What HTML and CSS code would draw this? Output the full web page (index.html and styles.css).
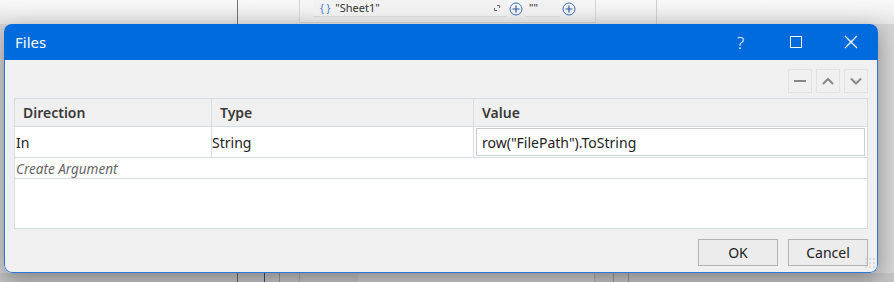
FILE: index.html
```html
<!DOCTYPE html>
<html lang="en">
<head>
    <meta charset="UTF-8">
    <title>Files</title>
    <link rel="stylesheet" href="styles.css">
</head>
<body>
    <div class="backdrop backdrop-top">
        <div class="bg-col col-left"></div>
        <div class="bg-col col-gap"></div>
        <div class="panel">
            <div class="arg-row">
                <div class="field field-name">
                    <span class="brace">{ }</span>
                    <span class="field-text">"Sheet1"</span>
                    <svg class="expand" width="8" height="8" viewBox="0 0 8 8"><path d="M4 1.5H6.5V4M1.5 4V6.5H4" fill="none" stroke="#666" stroke-width="1"/></svg>
                </div>
                <svg class="plus" width="14" height="14" viewBox="0 0 14 14"><circle cx="7" cy="7" r="6" fill="none" stroke="#3a6fb7" stroke-width="1"/><path d="M7 3.5V10.5M3.5 7H10.5" stroke="#2a5fa8" stroke-width="1.2"/></svg>
                <div class="field field-value">
                    <span class="field-text">""</span>
                </div>
                <svg class="plus" width="14" height="14" viewBox="0 0 14 14"><circle cx="7" cy="7" r="6" fill="none" stroke="#3a6fb7" stroke-width="1"/><path d="M7 3.5V10.5M3.5 7H10.5" stroke="#2a5fa8" stroke-width="1.2"/></svg>
            </div>
        </div>
        <div class="bg-col col-right"></div>
    </div>

    <div class="dialog">
        <div class="titlebar">
            <span class="title">Files</span>
            <div class="window-buttons">
                <span class="win-btn help">?</span>
                <span class="win-btn"><span class="max-box"></span></span>
                <span class="win-btn">
                    <svg width="14" height="14" viewBox="0 0 14 14"><path d="M1 1L13 13M13 1L1 13" stroke="#fff" stroke-width="1.2"/></svg>
                </span>
            </div>
        </div>

        <div class="dialog-body">
            <div class="toolbar">
                <button class="tool-btn" title="Remove">
                    <svg width="14" height="14" viewBox="0 0 14 14"><path d="M1 7H13" stroke="#888" stroke-width="2"/></svg>
                </button>
                <button class="tool-btn" title="Move up">
                    <svg width="14" height="14" viewBox="0 0 14 14"><path d="M2 10L7 5L12 10" fill="none" stroke="#888" stroke-width="2"/></svg>
                </button>
                <button class="tool-btn" title="Move down">
                    <svg width="14" height="14" viewBox="0 0 14 14"><path d="M2 4.5L7 9.5L12 4.5" fill="none" stroke="#888" stroke-width="2"/></svg>
                </button>
            </div>

            <div class="grid">
                <div class="grid-row grid-head">
                    <div class="cell col-dir">Direction</div>
                    <div class="cell col-type">Type</div>
                    <div class="cell col-value">Value</div>
                </div>
                <div class="grid-row grid-item">
                    <div class="cell col-dir">In</div>
                    <div class="cell col-type">String</div>
                    <div class="cell col-value">
                        <div class="value-input">row("FilePath").ToString</div>
                    </div>
                </div>
                <div class="create-row">Create Argument</div>
            </div>

            <div class="actions">
                <button class="btn">OK</button>
                <button class="btn">Cancel</button>
                <div class="grip"></div>
            </div>
        </div>
    </div>

    <div class="backdrop backdrop-bottom">
        <div class="bg-col b1"></div>
        <div class="bg-col b2"></div>
        <div class="bg-col b3"></div>
        <div class="bg-col b4"></div>
        <div class="bg-col b5"></div>
        <div class="bg-col b6"></div>
        <div class="bg-col b7"></div>
        <div class="bg-col b8"></div>
    </div>
</body>
</html>
```

FILE: styles.css
```css
* {
    margin: 0;
    padding: 0;
    box-sizing: border-box;
    font-family: "Noto Sans", "Open Sans", sans-serif;
}

body {
    width: 894px;
    height: 282px;
    overflow: hidden;
    background-color: #d4d4d4;
    color: #222;
    display: flex;
    flex-direction: column;
}

/* background application behind the dialog */
.backdrop {
    display: flex;
}

.backdrop-top {
    height: 24px;
    background: linear-gradient(to bottom, #f9f9f9, #e6e6e6);
}

.bg-col {
    height: 100%;
}

.col-left {
    width: 238px;
    border-right: 1px solid #707070;
}

.col-gap {
    width: 61px;
}

.panel {
    width: 297px;
    height: 23px;
    border-left: 1px solid #d6d6d6;
    border-right: 1px solid #d6d6d6;
    border-bottom: 1px solid #d6d6d6;
    background: linear-gradient(to bottom, #f7f7f7, #ececec);
    padding-left: 13px;
}

.col-right {
    width: 61px;
    border-right: 1px solid #cdcdcd;
}

.arg-row {
    display: flex;
    align-items: center;
    height: 17px;
}

.field {
    display: flex;
    align-items: center;
    height: 17px;
    background-color: #f2f2f2;
    border-bottom: 1px solid #dcdcdc;
    font-size: 11px;
    color: #333;
}

.field-name {
    width: 194px;
    padding-left: 7px;
    padding-right: 6px;
}

.brace {
    color: #3a7bd5;
    font-size: 10px;
    margin-right: 5px;
}

.field-text {
    flex: 1;
    line-height: 16px;
}

.expand {
    margin-left: auto;
}

.plus {
    margin: 0 2px;
}

.field-value {
    width: 35px;
    padding-left: 4px;
}

/* dialog window */
.dialog {
    position: relative;
    z-index: 1;
    width: 874px;
    height: 249px;
    margin-left: 4px;
    border-radius: 8px;
    background-color: #f0f0f0;
    box-shadow: 0 6px 22px rgba(0, 0, 0, 0.35);
    display: flex;
    flex-direction: column;
    overflow: hidden;
}

.titlebar {
    height: 36px;
    background-color: #006bdc;
    color: #fff;
    display: flex;
    align-items: center;
    padding-left: 11px;
    flex-shrink: 0;
}

.title {
    font-size: 15px;
}

.window-buttons {
    margin-left: auto;
    display: flex;
    align-items: center;
    height: 100%;
}

.win-btn {
    width: 55px;
    height: 100%;
    display: flex;
    align-items: center;
    justify-content: center;
    color: #fff;
    font-size: 17px;
    font-weight: 300;
}

.max-box {
    width: 12px;
    height: 12px;
    border: 1px solid #fff;
}

.dialog-body {
    flex: 1;
    border: 1px solid #2a78d4;
    border-top: none;
    border-radius: 0 0 8px 8px;
    padding: 9px 9px 0 9px;
    display: flex;
    flex-direction: column;
}

.toolbar {
    display: flex;
    justify-content: flex-end;
    gap: 4px;
    height: 24px;
}

.tool-btn {
    width: 24px;
    height: 24px;
    border: 1px solid #e2e2e2;
    background-color: #f0f0f0;
    display: flex;
    align-items: center;
    justify-content: center;
}

.grid {
    margin-top: 5px;
    height: 131px;
    background-color: #fff;
    border: 1px solid #d6dde2;
}

.grid-row {
    display: flex;
    border-bottom: 1px solid #d6dde2;
}

.grid-head {
    height: 28px;
    background-color: #f0f0f0;
}

.grid-head .cell {
    padding-left: 8px;
    font-size: 14px;
    font-weight: 600;
    color: #3a3a3a;
}

.grid-item {
    height: 31px;
}

.grid-item .cell {
    font-size: 14px;
    color: #222;
}

.cell {
    display: flex;
    align-items: center;
    border-right: 1px solid #d6dde2;
}

.col-dir {
    width: 197px;
    padding-left: 1px;
}

.col-type {
    width: 262px;
}

.col-value {
    flex: 1;
    border-right: none;
}

.grid-item .col-value {
    padding: 1px 2px;
}

.value-input {
    width: 100%;
    height: 28px;
    border: 1px solid #c8ccd0;
    display: flex;
    align-items: center;
    padding-left: 5px;
}

.create-row {
    height: 21px;
    line-height: 22px;
    padding-left: 1px;
    font-size: 13.5px;
    font-style: italic;
    color: #666;
    border-bottom: 1px solid #d6dde2;
}

.actions {
    display: flex;
    justify-content: flex-end;
    gap: 10px;
    margin-top: 10px;
    position: relative;
}

.btn {
    width: 80px;
    height: 27px;
    border: 1px solid #b4b4b4;
    background-color: #ececec;
    font-size: 14px;
    color: #222;
}

.grip {
    position: absolute;
    right: -8px;
    top: 18px;
    width: 12px;
    height: 12px;
    background-image: radial-gradient(circle, #dcdcdc 1px, transparent 1.5px);
    background-size: 4px 4px;
}

.backdrop-bottom {
    flex: 1;
    background-color: #c4c4c4;
}

.b1 { width: 238px; border-right: 1px solid #666; }
.b2 { width: 27px; border-right: 1px solid #2a4f90; }
.b3 { width: 15px; border-right: 1px solid #999; }
.b4 { width: 20px; border-right: 1px solid #aaa; }
.b5 { width: 58px; }
.b6 { width: 237px; background-color: #cdcdcd; border-right: 1px solid #aaa; }
.b7 { width: 19px; border-right: 1px solid #999; }
.b8 { width: 15px; border-right: 1px solid #999; }
```
